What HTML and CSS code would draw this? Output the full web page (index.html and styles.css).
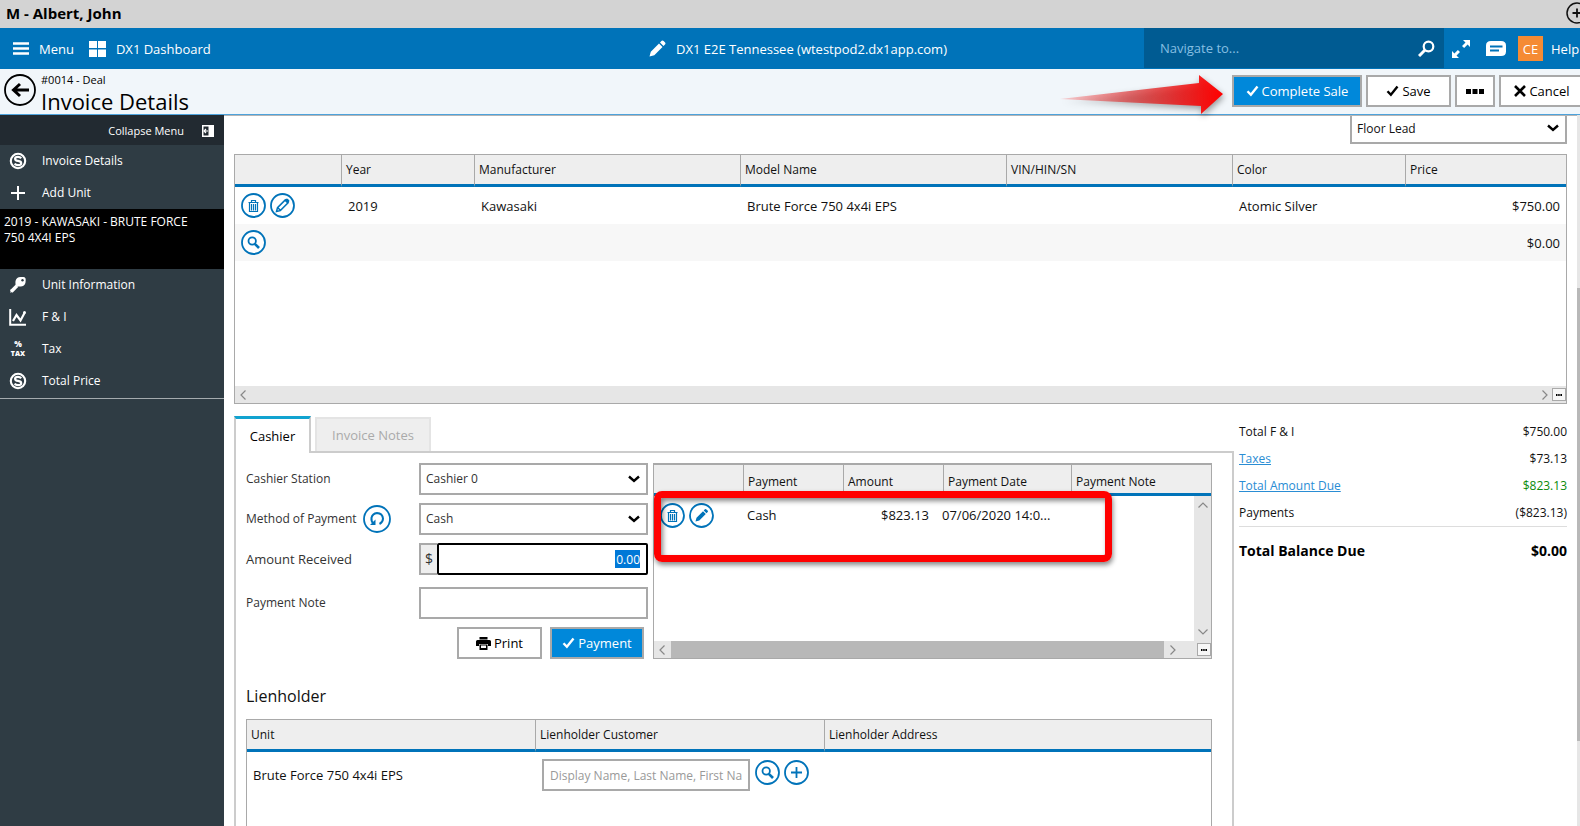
FILE: index.html
```html
<!DOCTYPE html>
<html lang="en">
<head>
<meta charset="utf-8">
<title>Invoice Details</title>
<link rel="stylesheet" href="styles.css">
</head>
<body>
<svg class="defs" aria-hidden="true">
  <symbol id="check" viewBox="0 0 12 12"><path d="M1 6.2 4.4 9.8 11 1.6" fill="none" stroke="currentColor" stroke-width="2.4"/></symbol>
  <symbol id="trash" viewBox="0 0 25 25"><circle cx="12.500" cy="12.500" r="11.500" fill="#fff" stroke="currentColor" stroke-width="1.800"/><path d="M10.500 9V7.500h4V9M7.500 9.500h10M8.500 10v8.500h8V10M10.500 11v6.500M12.500 11v6.500M14.500 11v6.500" fill="none" stroke="currentColor" stroke-width="1.200"/></symbol>
  <symbol id="edit" viewBox="0 0 25 25"><circle cx="12.500" cy="12.500" r="11.500" fill="#fff" stroke="currentColor" stroke-width="1.800"/><path d="M6.500 18.500l1-3.800 7.800-7.800 2.800 2.800-7.800 7.800zM7.800 14.700l2.600 2.600" fill="none" stroke="currentColor" stroke-width="1.500"/><path d="M14.500 7.500l1.800-1.700q.8-.6 1.600.2l1.100 1.100q.8.8.1 1.600l-1.700 1.700z" fill="currentColor"/></symbol>
  <symbol id="edit-solid" viewBox="0 0 25 25"><circle cx="12.500" cy="12.500" r="11.500" fill="#fff" stroke="currentColor" stroke-width="1.800"/><path d="M6.500 18.500l1-3.800 6.500-6.500 2.800 2.800-6.500 6.500zM14.700 7.500l1.200-1.200q.8-.6 1.500.1l1.200 1.200q.8.800.1 1.500l-1.200 1.200z" fill="currentColor"/></symbol>
  <symbol id="find" viewBox="0 0 25 25"><circle cx="12.500" cy="12.500" r="11.500" fill="#fff" stroke="currentColor" stroke-width="1.800"/><circle cx="11.200" cy="11" r="3.700" fill="none" stroke="currentColor" stroke-width="1.800"/><path d="M13.800 13.800 18 18" stroke="currentColor" stroke-width="2.600"/></symbol>
  <symbol id="plus" viewBox="0 0 25 25"><circle cx="12.500" cy="12.500" r="11.500" fill="#fff" stroke="currentColor" stroke-width="1.800"/><path d="M12.500 7v11M7 12.500h11" stroke="currentColor" stroke-width="1.800"/></symbol>
  <symbol id="dollar" viewBox="0 0 18 18"><circle cx="9" cy="9" r="7.200" fill="none" stroke="currentColor" stroke-width="2.100"/><path d="M12.200 6.300Q11 4.900 9 4.900q-2.900 0-2.900 1.900T9 8.900q3.200.4 3.200 2.300T9 13.200q-2.200 0-3.400-1.600" fill="none" stroke="currentColor" stroke-width="2.200"/></symbol>
  <symbol id="left" viewBox="0 0 8 12"><path d="M6.500 1.500 2 6l4.500 4.500" fill="none" stroke="currentColor" stroke-width="1.200"/></symbol>
  <symbol id="right" viewBox="0 0 8 12"><path d="M1.500 1.500 6 6l-4.500 4.500" fill="none" stroke="currentColor" stroke-width="1.200"/></symbol>
  <symbol id="up" viewBox="0 0 12 8"><path d="M1.500 6.500 6 2l4.500 4.500" fill="none" stroke="currentColor" stroke-width="1.200"/></symbol>
  <symbol id="down" viewBox="0 0 12 8"><path d="M1.500 1.500 6 6l4.500-4.500" fill="none" stroke="currentColor" stroke-width="1.200"/></symbol>
  <symbol id="caret" viewBox="0 0 12 8"><path d="M1 1.500 6 6l5-4.500" fill="none" stroke="currentColor" stroke-width="2.400"/></symbol>
</svg>

<header class="titlebar">
  <strong>M - Albert, John</strong>
  <button class="title-add" aria-label="Add"><svg width="22" height="22" viewBox="0 0 22 22"><circle cx="11" cy="11" r="10" fill="none" stroke="#111" stroke-width="1.500"/><path d="M11 6.500v9M6.500 11h9" stroke="#111" stroke-width="1.800"/></svg></button>
</header>

<nav class="topnav">
  <div class="nav-left">
    <button class="nav-item"><svg width="16" height="13" viewBox="0 0 16 13"><path d="M0 1.500h16M0 6.500h16M0 11.500h16" stroke="#fff" stroke-width="2.600"/></svg>Menu</button>
    <a class="nav-item" href="#"><svg width="17" height="16" viewBox="0 0 17 16"><path d="M0 0h8v7H0zM9 0h8v7H9zM0 8.500h8V16H0zM9 8.500h8V16H9z" fill="#fff"/></svg>DX1 Dashboard</a>
  </div>
  <a class="nav-item nav-site" href="#"><svg width="17" height="17" viewBox="0 0 17 17"><path d="M.5 16.500l1.300-4.800 8.200-8.200 3.500 3.500-8.200 8.200zM11 2.500l1.700-1.700q1-.7 1.900.2l1.500 1.500q.8.900.1 1.800L14.500 6z" fill="#fff"/></svg>DX1 E2E Tennessee (wtestpod2.dx1app.com)</a>
  <div class="nav-right">
    <div class="search">
      <input type="text" aria-label="Navigate to" placeholder="Navigate to...">
      <button aria-label="Search"><svg width="17" height="17" viewBox="0 0 17 17"><circle cx="10.500" cy="6.500" r="4.800" fill="none" stroke="#fff" stroke-width="2.200"/><path d="M7 10 1 16" stroke="#fff" stroke-width="3"/></svg></button>
    </div>
    <button class="expand" aria-label="Expand"><svg width="20" height="20" viewBox="0 0 20 20"><path d="M12 1h7v7l-2.400-2.400-3.500 3.500-2.100-2.100 3.500-3.500zM8 19H1v-7l2.400 2.400L6.900 10.900 9 13l-3.500 3.500z" fill="#fff"/></svg></button>
    <button class="chat" aria-label="Messages"><svg width="20" height="15" viewBox="0 0 20 15"><path d="M5 0h10q5 0 5 4.500v6q0 4.500-5 4.500H0V4.500Q0 0 5 0z" fill="#fff"/><path d="M4 5.500h12.500M4 9.500h9" stroke="#0073b9" stroke-width="1.800"/></svg></button>
    <span class="avatar">CE</span>
    <a class="help" href="#">Help</a>
  </div>
</nav>

<section class="subhead">
  <button class="back" aria-label="Back"><svg width="32" height="32" viewBox="0 0 32 32"><circle cx="16" cy="16" r="15" fill="none" stroke="#000" stroke-width="1.800"/><path d="M25 16H9.500M16 10l-6.500 6 6.500 6" fill="none" stroke="#000" stroke-width="3"/></svg></button>
  <div class="heading"><p>#0014 - Deal</p><h1>Invoice Details</h1></div>
  <svg class="pointer" width="182" height="50" viewBox="0 0 182 50" aria-hidden="true">
    <defs><linearGradient id="fade"><stop offset="0" stop-color="#f00" stop-opacity=".15"/><stop offset=".45" stop-color="#d22" stop-opacity=".65"/><stop offset="1" stop-color="#f00"/></linearGradient></defs>
    <path d="M0 26 139 10V2l24 19-22 20v-8z" fill="url(#fade)"/>
  </svg>
  <div class="actions">
    <button class="btn primary complete"><svg width="13" height="12"><use href="#check"/></svg>Complete Sale</button>
    <button class="btn save"><svg width="13" height="12"><use href="#check"/></svg>Save</button>
    <button class="btn more" aria-label="More"><svg width="18" height="5" viewBox="0 0 18 5"><path d="M0 0h5v5H0zM6.500 0h5v5h-5zM13 0h5v5h-5z"/></svg></button>
    <button class="btn cancel"><svg width="12" height="12" viewBox="0 0 12 12"><path d="M1 1l10 10M11 1 1 11" stroke="#000" stroke-width="2.600"/></svg>Cancel</button>
  </div>
</section>

<div class="workspace">
  <aside class="sidebar">
    <button class="collapse">Collapse Menu<svg width="12" height="12" viewBox="0 0 12 12"><path d="M0 0h12v12H0z" fill="#fff"/><path d="M1.500 1.500h5v9h-5z" fill="#222a31"/><path d="M2 6h4M4 4 2 6l2 2" stroke="#fff" stroke-width="1.200" fill="none"/></svg></button>
    <a class="side-item" href="#"><svg width="18" height="18"><use href="#dollar"/></svg>Invoice Details</a>
    <a class="side-item" href="#"><svg width="18" height="18" viewBox="0 0 18 18"><path d="M9 2v14M2 9h14" stroke="#fff" stroke-width="2"/></svg>Add Unit</a>
    <div class="unit">2019 - KAWASAKI - BRUTE FORCE 750 4X4I EPS</div>
    <a class="side-item" href="#"><svg width="18" height="18" viewBox="0 0 18 18"><path d="M8 9.800 2.300 15.500" stroke="#fff" stroke-width="3.400"/><path d="M1.500 17v-3.500l3.500 1z" fill="#fff"/><path d="M6.500 5Q7.500 1.200 11.500 1h3q2.400.2 2.200 3.200.1 5.800-4.700 6.300H8Q6 9.500 6.500 5z" fill="#fff"/><circle cx="13.500" cy="4.300" r="1.200" fill="#2f3c44"/></svg>Unit Information</a>
    <a class="side-item" href="#"><svg width="18" height="18" viewBox="0 0 18 18"><path d="M1.200 1v15.800H17" fill="none" stroke="#fff" stroke-width="2"/><path d="M4 13 7.500 7l4 5.500 4-7.500" fill="none" stroke="#fff" stroke-width="2.200"/><circle cx="15.500" cy="4.500" r="1.500" fill="#fff"/></svg>F &amp; I</a>
    <a class="side-item" href="#"><span class="tax-icon" aria-hidden="true"><b>%</b><i>TAX</i></span>Tax</a>
    <a class="side-item" href="#"><svg width="18" height="18"><use href="#dollar"/></svg>Total Price</a>
    <hr>
  </aside>

  <main class="content">
    <div class="lead-row"><div class="select lead"><select aria-label="Floor lead"><option>Floor Lead</option></select><svg width="12" height="8"><use href="#caret"/></svg></div></div>

    <div class="grid units">
      <table>
        <colgroup><col class="w107"><col class="w133"><col class="w266"><col><col class="w226"><col class="w173"><col class="w160"></colgroup>
        <thead><tr><th></th><th>Year</th><th>Manufacturer</th><th>Model Name</th><th>VIN/HIN/SN</th><th>Color</th><th>Price</th></tr></thead>
        <tbody>
          <tr><td class="tools"><button aria-label="Delete"><svg width="25" height="25"><use href="#trash"/></svg></button><button aria-label="Edit"><svg width="25" height="25"><use href="#edit"/></svg></button></td><td>2019</td><td>Kawasaki</td><td>Brute Force 750 4x4i EPS</td><td></td><td>Atomic Silver</td><td class="num">$750.00</td></tr>
          <tr class="alt"><td class="tools"><button aria-label="Find"><svg width="25" height="25"><use href="#find"/></svg></button></td><td></td><td></td><td></td><td></td><td></td><td class="num">$0.00</td></tr>
        </tbody>
      </table>
      <div class="hscroll"><svg width="8" height="12"><use href="#left"/></svg><span class="track"></span><svg width="8" height="12"><use href="#right"/></svg><button class="dots" aria-label="Columns"><svg width="6" height="2" viewBox="0 0 6 2"><path d="M0 0h1.500v2H0zM2.200 0h1.500v2H2.200zM4.400 0H6v2H4.400z"/></svg></button></div>
    </div>

    <div class="lower">
      <section class="cashier">
        <div class="tabs"><button class="tab active">Cashier</button><button class="tab">Invoice Notes</button><span class="tab-line"></span></div>
        <div class="panel">
          <div class="pay-area">
            <form class="form">
              <label for="station">Cashier Station</label>
              <div class="select"><select id="station"><option>Cashier 0</option></select><svg width="12" height="8"><use href="#caret"/></svg></div>
              <div class="method"><label for="method">Method of Payment</label><button type="button" aria-label="Reset"><svg width="28" height="28" viewBox="0 0 28 28"><circle cx="14" cy="14" r="13" fill="none" stroke="currentColor" stroke-width="1.800"/><path d="M10.500 18.500Q8 16.200 8.500 12.800 9.500 8.500 14 8q5.500.3 6 5.700-.2 3.600-3.500 5.300" fill="none" stroke="currentColor" stroke-width="2"/><path d="M12.500 14.500v5.500H7z" fill="currentColor"/></svg></button></div>
              <div class="select"><select id="method"><option>Cash</option></select><svg width="12" height="8"><use href="#caret"/></svg></div>
              <label for="amount">Amount Received</label>
              <div class="money"><span>$</span><div class="money-box"><input id="amount" type="text" value="0.00"></div></div>
              <label for="note">Payment Note</label>
              <input id="note" class="text" type="text">
              <div class="form-actions">
                <button type="button" class="btn print"><svg width="15" height="13" viewBox="0 0 15 13"><path d="M3.500 0h8v2.500h-8zM1.500 3h12Q15 3 15 4.500V9h-3V7H3v2H0V4.500Q0 3 1.500 3zM3.500 7.500h8V13h-8z"/><path d="M5 8.500h5V11H5z" fill="#fff"/></svg>Print</button>
                <button type="button" class="btn primary payment"><svg width="13" height="12"><use href="#check"/></svg>Payment</button>
              </div>
            </form>
            <div class="grid payments">
              <table>
                <colgroup><col class="w90"><col class="w100"><col class="w100"><col class="w128"><col></colgroup>
                <thead><tr><th></th><th>Payment</th><th>Amount</th><th>Payment Date</th><th>Payment Note</th></tr></thead>
              </table>
              <div class="pay-body">
                <table>
                  <colgroup><col class="w90"><col class="w100"><col class="w98"><col class="w130"><col></colgroup>
                  <tbody><tr><td class="tools"><button aria-label="Delete"><svg width="25" height="25"><use href="#trash"/></svg></button><button aria-label="Edit"><svg width="25" height="25"><use href="#edit-solid"/></svg></button></td><td>Cash</td><td class="num">$823.13</td><td class="date">07/06/2020 14:0...</td><td></td></tr></tbody>
                </table>
                <div class="vscroll"><svg width="12" height="8"><use href="#up"/></svg><svg width="12" height="8"><use href="#down"/></svg></div>
              </div>
              <div class="hscroll wide"><svg width="8" height="12"><use href="#left"/></svg><span class="track thumb"></span><svg width="8" height="12"><use href="#right"/></svg><button class="dots" aria-label="Columns"><svg width="6" height="2" viewBox="0 0 6 2"><path d="M0 0h1.500v2H0zM2.200 0h1.500v2H2.200zM4.400 0H6v2H4.400z"/></svg></button></div>
              <div class="callout" aria-hidden="true"></div>
            </div>
          </div>

          <h2>Lienholder</h2>
          <div class="grid lien">
            <table>
              <colgroup><col class="w289"><col class="w289"><col></colgroup>
              <thead><tr><th>Unit</th><th>Lienholder Customer</th><th>Lienholder Address</th></tr></thead>
              <tbody><tr><td>Brute Force 750 4x4i EPS</td><td><div class="customer"><input class="text" type="text" aria-label="Lienholder customer" placeholder="Display Name, Last Name, First Name"><button aria-label="Find"><svg width="25" height="25"><use href="#find"/></svg></button><button aria-label="Add"><svg width="25" height="25"><use href="#plus"/></svg></button></div></td><td></td></tr></tbody>
            </table>
          </div>
        </div>
      </section>

      <aside class="summary">
        <div class="sum-row"><span>Total F &amp; I</span><span>$750.00</span></div>
        <div class="sum-row"><a href="#">Taxes</a><span>$73.13</span></div>
        <div class="sum-row"><a href="#">Total Amount Due</a><span class="green">$823.13</span></div>
        <div class="sum-row"><span>Payments</span><span>($823.13)</span></div>
        <div class="sum-row total"><span>Total Balance Due</span><span>$0.00</span></div>
      </aside>
    </div>
  </main>
  <div class="page-scroll" aria-hidden="true"><span></span></div>
</div>
</body>
</html>
```
FILE: styles.css
```css
* { box-sizing: border-box; }
html, body { height: 100%; }
body {
  margin: 0;
  display: flex;
  flex-direction: column;
  overflow: hidden;
  font: 12px/16px "Open Sans", "Noto Sans", sans-serif;
  color: #111;
  background: #fff;
}
button, input, select { font: inherit; color: inherit; }
button { display: inline-flex; align-items: center; justify-content: center; padding: 0; border: 0; background: none; }
a { color: inherit; text-decoration: none; }
h1, h2, p { margin: 0; font-weight: 400; }
svg { display: block; flex: none; }
.defs { position: absolute; width: 0; height: 0; }

.titlebar {
  height: 28px; flex: none; display: flex; align-items: center; justify-content: space-between;
  padding: 0 0 3px 6px; background: #d3d3d3; overflow: hidden; font-size: 15px; color: #000;
}
.title-add { margin-right: -8px; flex: none; }

.topnav {
  height: 41px; flex: none; display: grid; grid-template-columns: 1fr auto 1fr;
  background: #0073b9; color: #fff; font-size: 13px; overflow: hidden;
}
.nav-left { display: flex; padding-left: 13px; gap: 15px; }
.nav-item { display: flex; align-items: center; gap: 10px; color: #fff; }
.nav-site { padding-left: 16px; }
.nav-right { display: flex; align-items: center; justify-content: flex-end; white-space: nowrap; }
.search { width: 300px; height: 40px; margin-bottom: 1px; padding: 0 9px 0 16px; display: flex; align-items: center; background: #005b92; }
.search input { flex: 1; min-width: 0; padding: 0; border: 0; background: none; outline: 0; }
.search input::placeholder { color: #86bfe2; opacity: 1; }
.expand { margin-left: 7px; }
.chat { margin-left: 15px; }
.avatar { width: 25px; height: 25px; margin: 0 8px 0 12px; background: #f58b34; display: grid; place-items: center; }
.help { width: 29px; }

.subhead {
  position: relative; height: 46px; flex: none; display: flex; align-items: flex-start;
  padding: 5px 0 0 4px; background: #f1f6fa; border-bottom: 1px solid #4ea3dc;
}
.heading { margin-left: 5px; flex: 1; color: #000; }
.heading p { font-size: 11px; line-height: 12px; }
.heading h1 { font-size: 22px; line-height: 30px; }
.pointer { position: absolute; right: 338px; top: 4px; filter: drop-shadow(1px 3px 3px #0006); }
.actions { display: flex; gap: 4px; margin: 1px -13px 0 0; }
.btn { height: 32px; gap: 3px; border: 2px solid #a9a9a9; background: #fff; font-size: 13px; color: #000; }
.btn.primary { background: #0088da; color: #fff; }
.complete { width: 130px; }
.save { width: 85px; }
.more { width: 40px; }
.cancel { width: 94px; padding-right: 8px; }

.workspace { flex: 1; min-height: 0; display: flex; }
.sidebar { width: 224px; flex: none; background: #2f3c44; color: #fff; }
.collapse { width: 100%; height: 30px; justify-content: flex-end; gap: 18px; padding: 2px 10px 0 0; background: #222a31; font-size: 11px; }
.side-item { display: flex; align-items: center; height: 32px; gap: 15px; padding-left: 9px; }
.unit { height: 60px; padding: 5px 30px 0 4px; background: #000; }
.tax-icon { width: 18px; display: flex; flex-direction: column; align-items: center; }
.tax-icon b { font-size: 8px; line-height: 10px; font-weight: 800; }
.tax-icon i { font-size: 7px; line-height: 10px; font-style: normal; font-weight: 800; }
.sidebar hr { margin: 1px 0 0; border: 0; border-top: 1px solid #a5abae; }

.content { flex: 1; min-width: 0; padding: 0 10px; display: flex; flex-direction: column; border-top: 1px solid #b5b5b5; }
.page-scroll { width: 3px; background: #e6e6e6; padding-top: 173px; }
.page-scroll span { display: block; height: 453px; background: #b8b8b8; }

.lead-row { display: flex; justify-content: flex-end; margin-bottom: 10px; }
.select { position: relative; display: flex; }
.select select { width: 100%; height: 32px; padding: 0 5px; border: 2px solid #a9a9a9; border-radius: 0; background: #fff; appearance: none; }
.select svg { position: absolute; right: 8px; top: 12px; color: #000; pointer-events: none; }
.lead { width: 217px; }
.lead select { height: 28px; border-top: 0; padding-bottom: 1px; }
.lead svg { top: 8px; }

.grid { border: 1px solid #a9a9a9; }
table { width: 100%; table-layout: fixed; border-collapse: separate; border-spacing: 0; }
th { height: 32px; padding: 1px 4px 0; background: #eee; border-right: 1px solid #a9a9a9; border-bottom: 3px solid #0073b9; text-align: left; font-weight: 400; }
th:last-child { border-right: 0; }
td { height: 37px; padding: 0 6px; font-size: 13px; }
.num { text-align: right; }
.alt { background: #f7f7f7; }
.tools button { margin-right: 4px; vertical-align: middle; color: #0073b9; }
.w90 { width: 90px; } .w98 { width: 98px; } .w100 { width: 100px; } .w107 { width: 107px; }
.w128 { width: 128px; } .w130 { width: 130px; } .w133 { width: 133px; } .w160 { width: 160px; }
.w173 { width: 173px; } .w226 { width: 226px; } .w266 { width: 266px; } .w289 { width: 289px; }

.units { height: 250px; display: flex; flex-direction: column; justify-content: space-between; }
.hscroll { height: 17px; display: flex; align-items: center; background: #e6e6e6; color: #888; padding-left: 4px; }
.track { flex: 1; }
.dots { width: 14px; height: 13px; margin-left: 3px; border: 1px solid #a9a9a9; background: #f7f7f7; color: #222; }

.lower { flex: 1; min-height: 0; display: flex; gap: 5px; padding-top: 12px; }
.cashier { flex: 1; min-width: 0; display: flex; flex-direction: column; }
.tabs { position: relative; display: flex; height: 37px; flex: none; font-size: 13px; }
.tab { padding: 0 13px; color: #000; }
.tab.active { width: 77px; border: 2px solid #ccc; border-top: 3px solid #11a3d0; border-bottom: 0; }
.tabs .tab:not(.active) { width: 116px; margin: 1px 0 2px 4px; color: #aaa; background: #eee; border: 2px solid #e4e4e4; border-bottom: 0; }
.tab-line { position: absolute; left: 77px; right: 0; bottom: 0; height: 2px; background: #ccc; }
.panel { flex: 1; min-height: 0; display: flex; flex-direction: column; padding: 10px 20px 0 10px; border: 2px solid #ccc; border-width: 0 2px; }
.pay-area { display: flex; gap: 5px; }
.form { width: 402px; flex: none; display: grid; grid-template-columns: 173px 1fr; grid-auto-rows: 32px; row-gap: 8px; align-items: center; color: #333; }
.method { display: flex; align-items: center; gap: 6px; }
.method button { color: #0073b9; }
.text { width: 100%; min-width: 0; height: 32px; padding: 0 6px; border: 2px solid #a9a9a9; background: #fff; }
label[for="amount"] { font-size: 13px; }
.money { display: flex; height: 32px; }
.money span { width: 18px; display: grid; place-items: center; border: 2px solid #a9a9a9; border-right: 0; background: #eee; font-size: 14px; }
.money-box { flex: 1; display: flex; align-items: center; justify-content: flex-end; padding-right: 6px; border: 2px solid #000; border-radius: 2px; }
.money input { width: 25px; height: 18px; padding: 0; border: 0; outline: 0; background: #0078d7; color: #fff; text-align: right; }
#note, label[for="note"], .form-actions { margin-top: 8px; }
.form-actions { grid-column: 1 / -1; display: flex; justify-content: flex-end; gap: 8px; padding-right: 4px; }
.print { width: 85px; }
.payment { width: 94px; }

.payments { position: relative; flex: 1; min-width: 0; height: 196px; border-top-width: 2px; display: flex; flex-direction: column; }
.payments th { height: 31px; padding-top: 6px; }
.pay-body { flex: 1; display: flex; align-items: flex-start; }
.pay-body table { flex: 1; width: 0; }
.pay-body td { height: 38px; padding: 0 3px; }
.pay-body td.tools { padding-left: 6px; }
.pay-body td.num { padding-right: 13px; }
.pay-body td.date { padding: 0; white-space: nowrap; }
.vscroll { width: 17px; align-self: stretch; padding: 5px 0; display: flex; flex-direction: column; align-items: center; justify-content: space-between; background: #e6e6e6; color: #888; }
.wide .thumb { height: 17px; background: #b8b8b8; margin: 0 5px; }
.wide .dots { margin-left: 20px; }
.callout { position: absolute; left: 0; right: 99px; top: 26px; height: 71px; border: 7px solid #f00; border-radius: 8px; box-shadow: 1px 3px 5px #0007, inset 2px 3px 5px #0007; }

h2 { margin: 26px 0 12px; font-size: 16px; line-height: 22px; }
.lien { flex: 1; min-height: 0; border-bottom: 0; }
.lien td { height: 44px; padding-top: 2px; }
.customer { display: flex; align-items: center; gap: 4px; }
.customer .text { width: 208px; margin-right: 1px; font-size: 12px; }
.customer .text::placeholder { color: #999; opacity: 1; }
.customer button { color: #0073b9; margin-bottom: 6px; }

.summary { width: 328px; flex: none; padding-top: 2px; }
.sum-row { display: flex; align-items: center; justify-content: space-between; height: 27px; }
.sum-row a { color: #2a8dd4; text-decoration: underline; }
.green { color: #0a8a0a; }
.total { height: 49px; border-top: 1px solid #ddd; font-size: 14px; font-weight: 700; color: #000; }
```
